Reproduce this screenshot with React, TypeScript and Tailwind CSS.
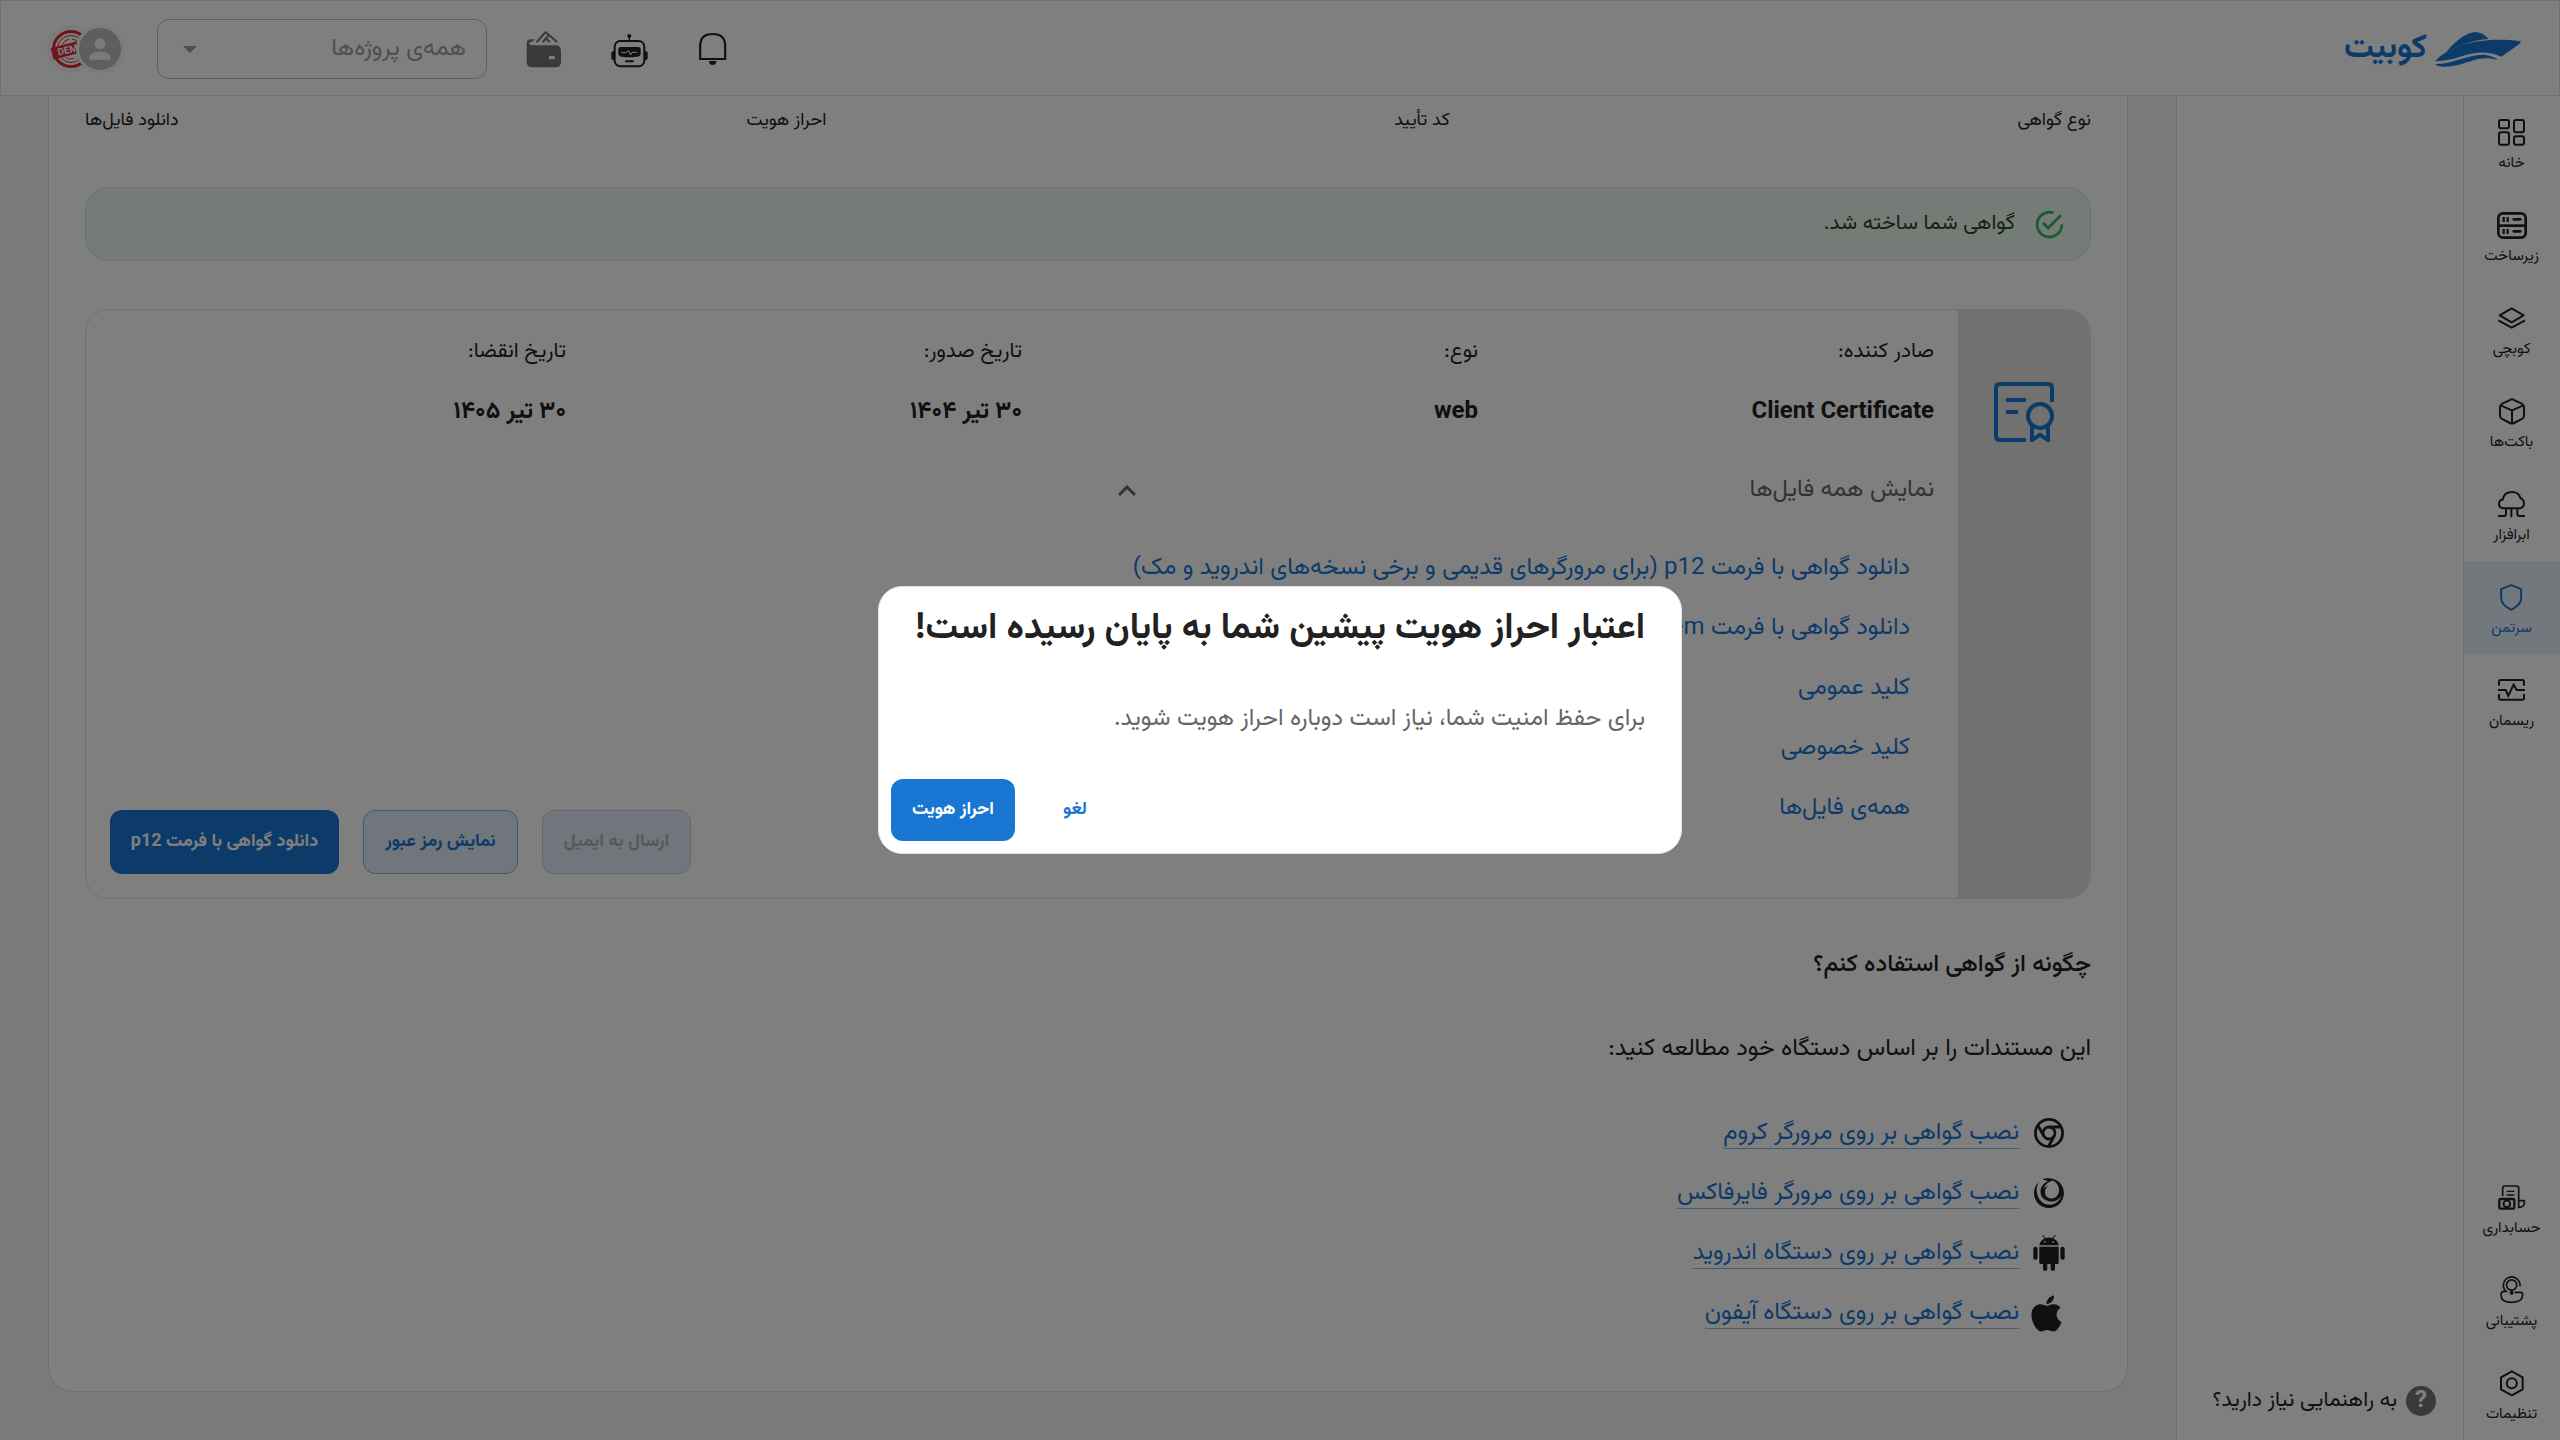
import type { ReactNode } from "react";
import { MdPerson } from "react-icons/md";
import { FaApple } from "react-icons/fa";

function Glyph({ box, className = "", children }: { box: string; className?: string; children: ReactNode }) {
  const [, , w, h] = box.split(" ").map(Number);
  return (
    <svg
      viewBox={box}
      width={w / 3}
      height={h / 3}
      fill="none"
      stroke="currentColor"
      strokeWidth={6}
      className={"shrink-0 overflow-visible " + className}
    >
      {children}
    </svg>
  );
}

const HomeIcon = () => (
  <Glyph box="1074 357 81 81">
    <rect x="1077" y="360" width="30" height="25" rx="6" />
    <rect x="1122" y="360" width="30" height="37" rx="6" />
    <rect x="1077" y="397" width="30" height="37" rx="6" />
    <rect x="1122" y="409" width="30" height="25" rx="6" />
  </Glyph>
);

const ServerIcon = () => (
  <Glyph box="1070 636 90 81">
    <rect x="1074" y="640" width="82" height="73" rx="14" strokeWidth={8} />
    <path d="M1074 677H1156" strokeWidth={8} />
    <path d="M1090 651v15M1102 651v15M1090 687v15M1102 687v15" strokeWidth={7} />
    <path d="M1120 658h20M1120 694h20" strokeWidth={8} strokeLinecap="round" />
  </Glyph>
);

const LayersIcon = () => (
  <Glyph box="1074 921 81 66">
    <path d="M1115 925l36 21-36 21-36-21Z" strokeLinejoin="round" />
    <path d="M1075 961l40 22 40-22" />
  </Glyph>
);

const BucketIcon = () => (
  <Glyph box="294 54 78 80">
    <path d="M333 58q3 0 8 3l21 10q7 4 7 11v26q0 5-6 9l-24 12q-6 3-12 0l-24-12q-6-4-6-9v-26q0-7 7-11l21-10q5-3 8-3Z" />
    <path d="M299 76l34 15 34-15M333 91v39" />
  </Glyph>
);

const CloudIcon = () => (
  <Glyph box="294 334 81 80">
    <path d="M310 386q-13-1-13-13 0-11 12-14 3-22 27-22 20 0 25 18 11 5 11 16 0 14-14 15Z" />
    <path d="M318 387v16q0 6-6 6h-18M334 387v26M352 387v16q0 6 6 6h17" />
  </Glyph>
);

const ShieldIcon = () => (
  <Glyph box="303 612 67 81">
    <path d="M336.500 615.500l30 12v26q0 22-30 36-30-14-30-36v-26Z" strokeLinejoin="round" />
  </Glyph>
);

const PulseIcon = () => (
  <Glyph box="294 897 81 66">
    <path d="M297 917v-12q0-5 5-5h65q5 0 5 5v12M297 942v12q0 5 5 5h65q5 0 5-5v-12" />
    <path d="M294 930h23l8 17 16-33 9 16h25" />
  </Glyph>
);

const InvoiceIcon = () => (
  <Glyph box="1014 108 81 75">
    <path d="M1028 141v-24q0-6 6-6h36q6 0 6 6v58q17 0 17-12v-8h-16" strokeWidth={5} />
    <path d="M1040 127h23M1040 138h23" strokeWidth={4} />
    <rect x="1018" y="150" width="45" height="29" rx="4" strokeWidth={7} />
    <circle cx="1040.500" cy="164.500" r="10" />
  </Glyph>
);

const SupportIcon = () => (
  <Glyph box="1018 380 71 82">
    <path d="M1078 411a25 25 0 1 0-42 15h-6q-9 0-9 11 0 22 32 22t33-22q0-8-6-8h-18" strokeWidth={5} />
    <circle cx="1053" cy="407" r="15.500" strokeWidth={5} />
    <circle cx="1053" cy="430" r="3" />
  </Glyph>
);

const SettingsIcon = () => (
  <Glyph box="1018 659 71 80">
    <path d="M1053.500 663l32.500 18v36l-32.500 18-32.500-18v-36Z" strokeLinejoin="round" />
    <circle cx="1053.500" cy="699" r="15" />
  </Glyph>
);

const BoatLogo = () => (
  <Glyph box="885 94 258 105" className="text-[#1976d2]">
    <g fill="currentColor" stroke="none">
      <path d="M918 156C935 133 972 98 1003 95c18-1 31 7 43 20C1000 118 955 135 918 156Z" />
      <path d="M885 182C930 134 1020 106 1143 122q-2 6-9 11l-50 35C1045 150 1005 154 965 167c-30 10-55 14-80 15Z" />
      <path d="M887 190c50 3 100-32 150-27q22 3 38 16c-50-18-90 8-125 15-25 5-57 7-63-4Z" />
    </g>
  </Glyph>
);

const WalletIcon = () => (
  <Glyph box="48 32 106 110" className="text-[#757575]">
    <path
      d="M50 68v56q0 17 17 17h70q16 0 16-17V92q0-17-16-17H66q-8 0-8-6 0-5 6-5h4l6-7H62q-12 1-12 11Z"
      fill="currentColor"
      stroke="none"
    />
    <path d="M80 66l24-28q3-3 6 0l31 27M98 66l17-20M110 56l10 9" strokeWidth={6.5} />
    <rect x="117" y="107" width="17" height="10" rx="2" fill="#fff" stroke="none" />
  </Glyph>
);

const RobotIcon = () => (
  <Glyph box="303 41 110 101">
    <g fill="currentColor" stroke="none">
      <circle cx="358" cy="47" r="6" />
      <path d="M325 86q0-6 7-6h52q8 0 8 6v14q0 9-12 9-22 4-44 0-11-1-11-9Z" />
      <rect x="345" y="120" width="27" height="6" rx="3" />
      <rect x="304" y="93" width="10" height="26" rx="5" />
      <rect x="403" y="93" width="10" height="26" rx="5" />
    </g>
    <path d="M358 48v14" strokeWidth={4} />
    <rect x="314" y="62" width="89" height="76" rx="17" />
    <path d="M334 97h14l8-6 6 13 4-8h16" stroke="#fff" strokeWidth={3} />
  </Glyph>
);

const BellIcon = () => (
  <Glyph box="567 39 82 96">
    <path d="M570.500 117V78q0-36 37.500-36t37.500 36v39Z" strokeWidth={6.5} />
    <path d="M597 123h22q0 12-11 12t-11-12Z" fill="currentColor" stroke="none" />
  </Glyph>
);

const CertificateIcon = () => (
  <svg viewBox="0 0 30 30" width={60} height={60} fill="none" stroke="#1976d2" strokeWidth={2}>
    <path d="M16 29H3q-2 0-2-2V3q0-2 2-2h24q2 0 2 2v7M6 9h10M6 15h6" />
    <circle cx="23" cy="17" r="6" />
    <path d="M19 21.500v7.500l4-2.600 4 2.600v-7.500" />
  </svg>
);

const SuccessIcon = () => (
  <svg viewBox="0 0 24 24" width={33} height={33} fill="#2eb85c">
    <path d="M20 12a8 8 0 1 1-5.800-7.690l1.570-1.570A10 10 0 1 0 22 12M7.910 10.080L6.500 11.500 11 16 21 6l-1.410-1.420L11 13.170l-3.090-3.090Z" />
  </svg>
);

const ChromeIcon = () => (
  <svg viewBox="0 0 30 30" width={30} height={30} fill="none" stroke="currentColor" strokeWidth={2.800}>
    <circle cx="15" cy="15" r="13.600" />
    <circle cx="15" cy="15" r="6" />
    <path d="M15 9h12M9.800 18L4 7.500M20.200 18L14.500 28.500" />
  </svg>
);

const FirefoxIcon = () => (
  <svg viewBox="0 0 30 30" width={30} height={30} fill="currentColor" fillRule="evenodd">
    <path d="M8 1.800C17-2.500 29.900 3 29.900 15 29.900 23.500 23.500 30 15 30 6.500 30 0 23.500 0 15 0 10.500 1.500 7 4.500 4.500 2.500 8.500 2.400 12 3 15 4.200 22 9.500 27 16 26.800 21.500 26.500 26 22.500 27.500 18 25 21.500 21 24 17 23.500 10 23 6 18.500 6.500 12.500 7 8 9.500 5.500 14 3 12 2.200 10 1.500 8 1.800ZM14 8.500C10.500 10.500 10 15.500 12.500 18.500 15.500 21.500 21.500 21 24 16.500 26.500 11 24 5 19 2.500 15 3.500 11 6 9.800 11 11 9 12.500 8.500 14 8.500Z" />
  </svg>
);

const AndroidIcon = () => (
  <svg viewBox="0 0 32 36" width={32} height={36} fill="currentColor">
    <path d="M6.300 10.300Q7 5.500 11.500 3.400L9.300.500l.9-.5 2.300 3q3.500-1 7 0l2.300-3 .9.500-2.200 2.900q4.500 2.100 5.200 6.900Z" />
    <path d="M6.300 11.800h19.400v15.700q0 1.500-1.500 1.500H7.800q-1.500 0-1.500-1.500Z" />
    <rect x=".3" y="11.800" width="4.300" height="13" rx="2.100" />
    <rect x="27.400" y="11.800" width="4.300" height="13" rx="2.100" />
    <rect x="10" y="26" width="4.300" height="10" rx="2.100" />
    <rect x="17.700" y="26" width="4.300" height="10" rx="2.100" />
    <circle cx="11.800" cy="6.800" r=".9" fill="#fff" />
    <circle cx="20.200" cy="6.800" r=".9" fill="#fff" />
  </svg>
);

const DemoStamp = () => (
  <svg viewBox="0 0 42 42" width={42} height={42} fill="none" stroke="#dc2b36">
    <circle cx="21" cy="21" r="17.500" strokeWidth={3} />
    <circle cx="21" cy="21" r="13.500" strokeWidth={1} />
    <circle cx="21" cy="21" r="10" strokeWidth={1} strokeDasharray="9 3" />
    <g transform="rotate(-14 21 21)">
      <rect x="1.500" y="15" width="39" height="12" fill="#dc2b36" stroke="none" />
      <text x="21" y="24.600" textAnchor="middle" fontSize="10" fontWeight="700" fill="#fff" stroke="none" fontFamily="Roboto, sans-serif">
        DEMO
      </text>
    </g>
  </svg>
);

const topNav = [
  { label: "خانه", icon: <HomeIcon /> },
  { label: "زیرساخت", icon: <ServerIcon /> },
  { label: "کوبچی", icon: <LayersIcon /> },
  { label: "باکت‌ها", icon: <BucketIcon /> },
  { label: "ابرافزار", icon: <CloudIcon /> },
  { label: "سرتمن", icon: <ShieldIcon />, active: true },
  { label: "ریسمان", icon: <PulseIcon /> },
];

const bottomNav = [
  { label: "حسابداری", icon: <InvoiceIcon /> },
  { label: "پشتیبانی", icon: <SupportIcon /> },
  { label: "تنظیمات", icon: <SettingsIcon /> },
];

function NavItem({ label, icon, active }: { label: string; icon: ReactNode; active?: boolean }) {
  return (
    <a className={"flex h-[93px] flex-col items-center pt-[21px] pr-px " + (active ? "bg-[#e6f1fa] text-[#1976d2]" : "")}>
      <span className="flex h-[30px] items-center">{icon}</span>
      <span className="mt-[5px] text-[15px] leading-6">{label}</span>
    </a>
  );
}

const fields = [
  { label: "صادر کننده:", value: "Client Certificate" },
  { label: "نوع:", value: "web" },
  { label: "تاریخ صدور:", value: "۳۰ تیر ۱۴۰۴" },
  { label: "تاریخ انقضا:", value: "۳۰ تیر ۱۴۰۵" },
];

const files = [
  "دانلود گواهی با فرمت p12 (برای مرورگرهای قدیمی و برخی نسخه‌های اندروید و مک)",
  "دانلود گواهی با فرمت pem",
  "کلید عمومی",
  "کلید خصوصی",
  "همه‌ی فایل‌ها",
];

const guides = [
  { label: "نصب گواهی بر روی مرورگر کروم", icon: <ChromeIcon /> },
  { label: "نصب گواهی بر روی مرورگر فایرفاکس", icon: <FirefoxIcon /> },
  { label: "نصب گواهی بر روی دستگاه اندروید", icon: <AndroidIcon /> },
  { label: "نصب گواهی بر روی دستگاه آیفون", icon: <FaApple size={41} className="mr-[6px] shrink-0" /> },
];

function Header() {
  return (
    <header className="flex h-24 shrink-0 items-center border border-[#e0e0e0] bg-white pt-[2px] pr-[38px] pl-[46px]">
      <div className="flex items-center gap-2">
        <BoatLogo />
        <span className="text-[33px] leading-10 font-bold text-[#1976d2]">کوبیت</span>
      </div>
      <div className="mr-auto flex items-center">
        <BellIcon />
        <div className="mt-[3px] mr-[51px]">
          <RobotIcon />
        </div>
        <div className="mr-[50px]">
          <WalletIcon />
        </div>
        <div className="mr-[39px] flex h-[60px] w-[330px] items-center justify-between rounded-xl border border-[#bdbdbd] pr-5 pl-[25px]">
          <span className="text-[24px] leading-9 text-[#9e9e9e]">همه‌ی پروژه‌ها</span>
          <svg viewBox="0 0 14 7" width={14} height={7} fill="#9e9e9e">
            <path d="M0 0h14L7 7Z" />
          </svg>
        </div>
        <div className="isolate mr-[33px] flex items-center">
          <div className="z-10 flex size-12 items-center justify-center rounded-full border-[3px] border-[#f5f5f5] bg-[#bdbdbd] text-[#f5f5f5]">
            <MdPerson size={32} />
          </div>
          <div className="-mr-[19px] flex size-12 items-center justify-center rounded-full border-[3px] border-[#f5f5f5] bg-[#fafafa]">
            <DemoStamp />
          </div>
        </div>
      </div>
    </header>
  );
}

function CertificateCard() {
  return (
    <section className="mt-12 flex h-[590px] overflow-hidden rounded-3xl border border-[#e0e0e0]">
      <div className="flex w-[132px] shrink-0 justify-center bg-[#e2e2e2] pt-[72px]">
        <CertificateIcon />
      </div>
      <div className="flex flex-1 flex-col pt-[26px] pr-6 pb-6 pl-6">
        <div className="grid grid-cols-4">
          {fields.map((f) => (
            <div key={f.label} className="flex flex-col gap-7">
              <span className="text-[21px] leading-8">{f.label}</span>
              <span className="text-[24px] leading-8 font-bold">{f.value}</span>
            </div>
          ))}
        </div>
        <div className="mt-[46px] flex flex-1">
          <div className="flex w-[822px] shrink-0 flex-col">
            <div className="flex h-8 items-center justify-between pl-[6px] text-[#666]">
              <span className="text-[24px] leading-8">نمایش همه فایل‌ها</span>
              <svg viewBox="0 0 18 11" width={18} height={11} fill="none" stroke="currentColor" strokeWidth={3}>
                <path d="M1 10l8-8 8 8" />
              </svg>
            </div>
            <ul className="mt-8 pr-6 text-[24px] text-[#1976d2]">
              {files.map((f) => (
                <li key={f} className="h-[60px] leading-[60px] whitespace-nowrap">
                  {f}
                </li>
              ))}
            </ul>
          </div>
          <div className="mr-auto flex gap-6 self-end text-[18px] font-bold">
            <button className="h-16 w-[149px] rounded-xl border border-[#c8d0da] bg-[#e3ebf8] text-[#b0b0b0]">ارسال به ایمیل</button>
            <button className="h-16 w-[155px] rounded-xl border border-[#7db4e8] bg-[#e3ebf8] text-[#1976d2]">نمایش رمز عبور</button>
            <button className="h-16 w-[229px] rounded-xl bg-[#1976d2] text-white">دانلود گواهی با فرمت p12</button>
          </div>
        </div>
      </div>
    </section>
  );
}

function MainContent() {
  return (
    <main className="flex-1 bg-[#f5f5f5] px-12 pb-12">
      <div className="h-[1296px] rounded-b-3xl border border-t-0 border-[#e0e0e0] bg-white px-9">
        <div className="flex h-12 items-center justify-between pt-[2px] text-[18px]">
          <span>نوع گواهی</span>
          <span>کد تأیید</span>
          <span>احراز هویت</span>
          <span>دانلود فایل‌ها</span>
        </div>
        <div className="mt-[43px] flex h-[74px] items-center gap-[18px] rounded-3xl border border-[#d3e5d6] bg-[#ebf7ee] pr-6 text-[21px] text-[#1e4620]">
          <SuccessIcon />
          <span>گواهی شما ساخته شد.</span>
        </div>
        <CertificateCard />
        <h2 className="mt-[50px] text-[24px] leading-8 font-medium">چگونه از گواهی استفاده کنم؟</h2>
        <p className="mt-[52px] text-[24px] leading-8">این مستندات را بر اساس دستگاه خود مطالعه کنید:</p>
        <ul className="mt-[38px] pr-6">
          {guides.map((g) => (
            <li key={g.label} className="flex h-[60px] items-center gap-3">
              <span className="flex w-9 items-center justify-center">{g.icon}</span>
              <a className="border-b border-[#8fbbe6] pt-px text-[24px] leading-[30px] text-[#1976d2]">{g.label}</a>
            </li>
          ))}
        </ul>
      </div>
    </main>
  );
}

function ReauthDialog() {
  return (
    <div className="fixed inset-0 flex items-center justify-center bg-black/50">
      <div className="flex h-[268px] w-[804px] flex-col rounded-3xl border border-[#e0e0e0] bg-white px-3 pb-3">
        <h1 className="mt-[18px] pr-6 text-[36px] leading-[48px] font-bold">اعتبار احراز هویت پیشین شما به پایان رسیده است!</h1>
        <p className="mt-12 pr-6 text-[24px] leading-9 text-[#666]">برای حفظ امنیت شما، نیاز است دوباره احراز هویت شوید.</p>
        <div className="mt-auto flex justify-end gap-3 text-[18px] font-bold">
          <button className="h-[62px] w-24 text-[#1976d2]">لغو</button>
          <button className="h-[62px] w-[124px] rounded-xl bg-[#1976d2] text-white">احراز هویت</button>
        </div>
      </div>
    </div>
  );
}

export default function App() {
  return (
    <div
      dir="rtl"
      className="flex h-[1440px] w-[2560px] flex-col overflow-hidden bg-white font-['Vazirmatn','Roboto','DejaVu_Sans',sans-serif] text-[#212121]"
    >
      <Header />
      <div className="flex min-h-0 flex-1">
        <nav className="flex w-[97px] shrink-0 flex-col border-l border-[#e0e0e0] bg-white">
          {topNav.map((n) => (
            <NavItem key={n.label} {...n} />
          ))}
          <div className="mt-auto">
            {bottomNav.map((n) => (
              <NavItem key={n.label} {...n} />
            ))}
          </div>
        </nav>
        <aside className="flex w-[287px] shrink-0 items-end border-l border-[#e0e0e0] bg-white pr-[27px] pb-6">
          <div className="flex items-center gap-[9px]">
            <span className="flex size-[30px] items-center justify-center rounded-full bg-[#757575] pt-px text-[24px] leading-none font-bold text-white">
              ?
            </span>
            <span className="pt-px text-[21.3px] leading-[30px]">به راهنمایی نیاز دارید؟</span>
          </div>
        </aside>
        <MainContent />
      </div>
      <ReauthDialog />
    </div>
  );
}
